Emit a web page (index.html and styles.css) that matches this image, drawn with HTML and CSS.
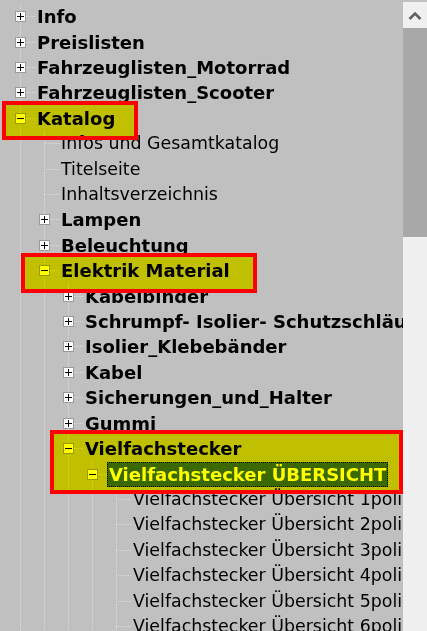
FILE: index.html
```html
<!DOCTYPE html>
<html lang="de">
<head>
    <meta charset="UTF-8">
    <meta name="viewport" content="width=device-width, initial-scale=1.0">
    <title>Katalog</title>
    <link rel="stylesheet" href="styles.css">
</head>
<body>
    <div class="window">
        <div class="tree">
            <ul class="nodes">
                <li><div class="row"><span class="twig"><span class="box plus"></span></span><span class="label">Info</span></div></li>
                <li><div class="row"><span class="twig"><span class="box plus"></span></span><span class="label">Preislisten</span></div></li>
                <li><div class="row"><span class="twig"><span class="box plus"></span></span><span class="label">Fahrzeuglisten_Motorrad</span></div></li>
                <li><div class="row"><span class="twig"><span class="box plus"></span></span><span class="label">Fahrzeuglisten_Scooter</span></div></li>
                <li>
                    <div class="row"><span class="twig"><span class="box minus"></span></span><span class="label">Katalog</span></div>
                    <ul class="nodes">
                        <li><div class="row"><span class="twig"></span><span class="label plain">Infos und Gesamtkatalog</span></div></li>
                        <li><div class="row"><span class="twig"></span><span class="label plain">Titelseite</span></div></li>
                        <li><div class="row"><span class="twig"></span><span class="label plain">Inhaltsverzeichnis</span></div></li>
                        <li><div class="row"><span class="twig"><span class="box plus"></span></span><span class="label">Lampen</span></div></li>
                        <li><div class="row"><span class="twig"><span class="box plus"></span></span><span class="label">Beleuchtung</span></div></li>
                        <li>
                            <div class="row"><span class="twig"><span class="box minus"></span></span><span class="label">Elektrik Material</span></div>
                            <ul class="nodes">
                                <li><div class="row"><span class="twig"><span class="box plus"></span></span><span class="label">Kabelbinder</span></div></li>
                                <li><div class="row"><span class="twig"><span class="box plus"></span></span><span class="label">Schrumpf- Isolier- Schutzschläuche</span></div></li>
                                <li><div class="row"><span class="twig"><span class="box plus"></span></span><span class="label">Isolier_Klebebänder</span></div></li>
                                <li><div class="row"><span class="twig"><span class="box plus"></span></span><span class="label">Kabel</span></div></li>
                                <li><div class="row"><span class="twig"><span class="box plus"></span></span><span class="label">Sicherungen_und_Halter</span></div></li>
                                <li><div class="row"><span class="twig"><span class="box plus"></span></span><span class="label">Gummi</span></div></li>
                                <li>
                                    <div class="row"><span class="twig"><span class="box minus"></span></span><span class="label">Vielfachstecker</span></div>
                                    <ul class="nodes">
                                        <li>
                                            <div class="row"><span class="twig"><span class="box minus"></span></span><span class="label selected">Vielfachstecker ÜBERSICHT</span></div>
                                            <ul class="nodes">
                                                <li><div class="row"><span class="twig"></span><span class="label plain">Vielfachstecker Übersicht 1polig</span></div></li>
                                                <li><div class="row"><span class="twig"></span><span class="label plain">Vielfachstecker Übersicht 2polig</span></div></li>
                                                <li><div class="row"><span class="twig"></span><span class="label plain">Vielfachstecker Übersicht 3polig</span></div></li>
                                                <li><div class="row"><span class="twig"></span><span class="label plain">Vielfachstecker Übersicht 4polig</span></div></li>
                                                <li><div class="row"><span class="twig"></span><span class="label plain">Vielfachstecker Übersicht 5polig</span></div></li>
                                                <li><div class="row"><span class="twig"></span><span class="label plain">Vielfachstecker Übersicht 6polig</span></div></li>
                                            </ul>
                                        </li>
                                    </ul>
                                </li>
                            </ul>
                        </li>
                    </ul>
                </li>
            </ul>

            <!-- marker boxes drawn over the tree -->
            <div class="mark mark-katalog"></div>
            <div class="mark mark-elektrik"></div>
            <div class="mark mark-stecker"></div>
        </div>

        <div class="scrollbar">
            <div class="arrow">
                <svg width="14" height="9" viewBox="0 0 14 9"><polyline points="1.5,8 7,2.5 12.5,8" fill="none" stroke="#606060" stroke-width="2.5"/></svg>
            </div>
            <div class="thumb"></div>
        </div>
    </div>
</body>
</html>
```

FILE: styles.css
```css
body {
    margin: 0;
    background: #c0c0c0;
    font-family: "DejaVu Sans", Verdana, sans-serif;
}
.window {
    display: flex;
    height: 631px;
    overflow: hidden;
}
.tree {
    position: relative;
    flex: none;
    width: 403px;
    padding-top: 4px;
    box-sizing: border-box;
    overflow: hidden;
    background: #c0c0c0;
}
.nodes {
    list-style: none;
    margin: 0;
    padding: 0;
    background-image: repeating-linear-gradient(to bottom, #dcdcdc 0 1px, transparent 1px 2px);
    background-size: 1px 100%;
    background-repeat: no-repeat;
    background-position: 20px 0;
}
.nodes .nodes {
    padding-left: 24px;
    background-position: 44px 0;
}
.row {
    display: flex;
    align-items: center;
    height: 25.42px;
    white-space: nowrap;
}
.twig {
    flex: none;
    display: flex;
    align-items: center;
    width: 22px;
    height: 100%;
    margin-left: 15px;
    background-image: repeating-linear-gradient(to right, #dcdcdc 0 1px, transparent 1px 2px);
    background-size: 15px 1px;
    background-repeat: no-repeat;
    background-position: 5px 50%;
}
.box {
    width: 11px;
    height: 11px;
    box-sizing: border-box;
    border: 1px solid #9a9a9a;
    background: #fff;
}
.box.plus {
    background:
        linear-gradient(#000, #000) center / 7px 1px no-repeat,
        linear-gradient(#000, #000) center / 1px 7px no-repeat,
        #fff;
}
.box.minus {
    background:
        linear-gradient(#000, #000) center / 7px 1px no-repeat,
        #fff;
}
.label {
    font-size: 18px;
    font-weight: bold;
    line-height: 25px;
    color: #000;
}
.label.plain {
    font-size: 17.4px;
    font-weight: normal;
}
.label.selected {
    margin-left: -2px;
    padding: 0 2px;
    color: #fff;
    background: #3c68c8;
    outline: 1px dotted #000;
    outline-offset: -1px;
}

/* red frames with a yellow marker fill */
.mark {
    position: absolute;
    box-sizing: border-box;
    border: 4px solid #ff0000;
}
.mark::before {
    content: "";
    position: absolute;
    inset: 0;
    background: #ffff00;
    mix-blend-mode: multiply;
}
.mark-katalog {
    left: 2px;
    top: 101px;
    width: 136px;
    height: 39px;
}
.mark-elektrik {
    left: 21px;
    top: 253px;
    width: 236px;
    height: 40px;
}
.mark-stecker {
    left: 50px;
    top: 430px;
    width: 353px;
    height: 64px;
}

.scrollbar {
    flex: none;
    display: flex;
    flex-direction: column;
    width: 24px;
    margin-top: 2px;
    background: #f0f0f0;
}
.arrow {
    display: flex;
    align-items: center;
    justify-content: center;
    height: 26px;
}
.thumb {
    height: 209px;
    background: #a8a8a8;
}
```
